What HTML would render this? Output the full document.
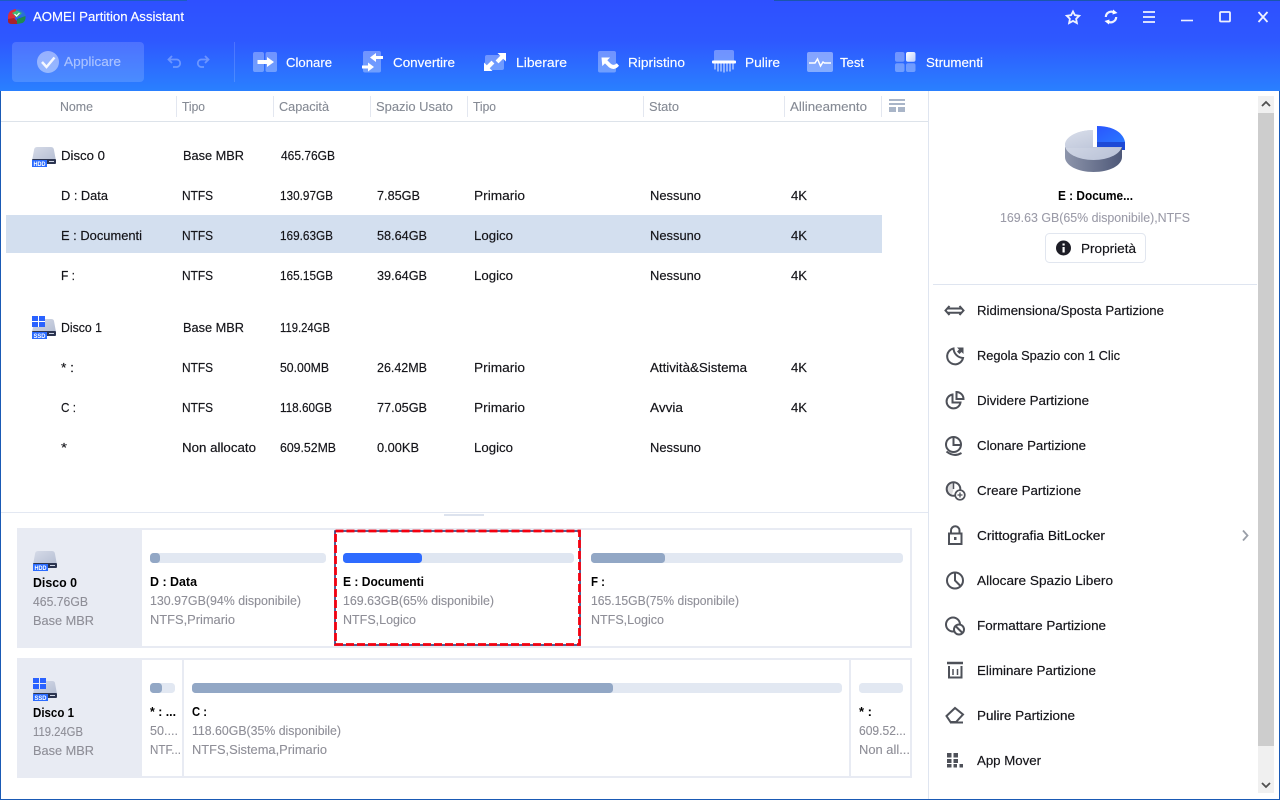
<!DOCTYPE html>
<html><head><meta charset="utf-8"><title>AOMEI Partition Assistant</title>
<style>
html,body{margin:0;padding:0;background:#fff;width:1280px;height:800px;overflow:hidden}
svg{display:block}
text{font-family:"Liberation Sans",sans-serif;font-size:13px;fill:#15151a;stroke:#15151a;stroke-width:.18}
.w{fill:#fff;stroke:#fff;stroke-width:.15}
.h{fill:#858a94;stroke:#858a94;stroke-width:.12}
.g{fill:#8e8e97;stroke:#8e8e97;stroke-width:.12}
.b{font-weight:bold;fill:#000;stroke:none}
.s{font-size:6.5px;font-weight:bold;fill:#fff;stroke:none}
.ic{fill:none;stroke:#4e5159;stroke-width:2}
.tb{fill:#fff;fill-opacity:.32}
</style></head><body>
<svg width="1280" height="800" viewBox="0 0 1280 800" xmlns="http://www.w3.org/2000/svg">
<defs>
<linearGradient id="hg" x1="0" y1="0" x2="0" y2="1"><stop offset="0" stop-color="#2e50ff"/><stop offset=".45" stop-color="#2e58ff"/><stop offset="1" stop-color="#2a80ff"/></linearGradient>
<linearGradient id="dk" x1="0" y1="0" x2="1" y2="1"><stop offset="0" stop-color="#d6dbe8"/><stop offset="1" stop-color="#b4bdd2"/></linearGradient>
<linearGradient id="pt" x1="0" y1="0" x2="1" y2="1"><stop offset="0" stop-color="#d9deea"/><stop offset="1" stop-color="#b8c1d6"/></linearGradient>
<linearGradient id="ps" x1="0" y1="0" x2="1" y2="0"><stop offset="0" stop-color="#8d95ab"/><stop offset="1" stop-color="#4e5878"/></linearGradient>
<linearGradient id="pb" x1="0" y1="0" x2="1" y2="1"><stop offset="0" stop-color="#2a55ff"/><stop offset="1" stop-color="#2a78ff"/></linearGradient>
<linearGradient id="sq" x1="0" y1="0" x2="1" y2="1"><stop offset="0" stop-color="#fff"/><stop offset="1" stop-color="#b9ccff"/></linearGradient>
</defs>
<rect width="1280" height="800" fill="#fff"/>
<rect width="1280" height="91" fill="url(#hg)"/>
<rect x="0" y="0" width="187" height="1" fill="#1c5cc0"/>
<rect x="774" y="0" width="506" height="1" fill="#1a55ad"/>

<!-- logo -->
<path d="M8 17q0-7 8-8l3 1-3 6-3 6-5-.5z" fill="#d92f3a"/>
<path d="M16 9q8 0 10 7l-5 1-5-3z" fill="#2a6fd8"/>
<path d="M8 19l6-1 3 3v3h-5q-4 0-4-3z" fill="#a8222c"/>
<path d="M17 19l8.500-3q.5 5-3 7l-5.500 1z" fill="#1f8a4f"/>
<path d="M12 13l5-2.500 5 2.500-5 5z" fill="#3dbb74"/>
<path d="M14.500 14l2 2 3-3" fill="none" stroke="#fff" stroke-width="1.200"/>
<text x="33" y="21" class="w" textLength="151" lengthAdjust="spacingAndGlyphs">AOMEI Partition Assistant</text>

<!-- window buttons -->
<g fill="none" stroke="#fff" stroke-opacity=".92" stroke-width="1.800">
<path d="M1073 11.500l1.900 3.700 4.300.6-3.100 3 .8 4.200-3.900-2.100-3.900 2.100.8-4.200-3.100-3 4.300-.6z"/>
<path d="M1105.800 17a5.500 5.500 0 0 1 8.700-4.300M1116.200 17a5.500 5.500 0 0 1-8.700 4.300" stroke-width="2.200"/>
<path d="M1143 12h12M1143 17h12M1143 22h12"/>
<path d="M1181 20.500h12" stroke-width="1.600"/>
<rect x="1220" y="12" width="10" height="9.500" rx="1"/>
<path d="M1258.500 12l9 10M1267.500 12l-9 10"/>
</g>
<path d="M1113 9.500l4.500 3.500-5 1.500zM1109 24.500l-4.500-3.500 5-1.500z" fill="#fff"/>

<!-- toolbar -->
<rect x="12" y="42" width="132" height="40" rx="4" fill="#fff" fill-opacity=".15"/>
<circle cx="48" cy="62" r="11" fill="#fff" fill-opacity=".42"/>
<path d="M42 62l4.500 5 8-9.500" fill="none" stroke="#fff" stroke-opacity=".9" stroke-width="2.500"/>
<text x="64" y="66" class="w" style="fill-opacity:.5;stroke-opacity:.4" textLength="57" lengthAdjust="spacingAndGlyphs">Applicare</text>
<g fill="none" stroke="#fff" stroke-opacity=".3" stroke-width="1.800">
<path d="M172 56l-3.500 3.500 3.500 3.500M169 59.500h8a3.800 3.800 0 0 1 0 7.500h-4"/>
<path d="M205 56l3.500 3.500-3.500 3.500M208 59.500h-7a3.800 3.800 0 0 0 0 7.500h3"/>
</g>
<rect x="234" y="42" width="1" height="40" fill="#fff" fill-opacity=".15"/>

<!-- clonare -->
<rect x="253" y="52" width="11" height="20" rx="2" class="tb"/>
<rect x="265.500" y="52" width="11.500" height="20" rx="2" class="tb"/>
<path d="M257.500 60h9.500v-3l7 5-7 5v-3h-9.500z" fill="#fff"/>
<!-- convertire -->
<rect x="363" y="51" width="18" height="21.500" rx="2" class="tb"/>
<path d="M370 57.500l6-4.500v3h7v3h-7v3zM374 67l-6 4.500v-3h-6v-3h6v-3z" fill="#fff"/>
<!-- liberare -->
<rect x="485" y="55" width="19" height="15" rx="2" class="tb"/>
<path d="M506 53v8.500l-2.800-2.800-4.700 4.700-2.900-2.900 4.700-4.700-2.800-2.800zM484 71v-8.500l2.800 2.800 4.700-4.700 2.900 2.900-4.700 4.700 2.800 2.800z" fill="#fff"/>
<!-- ripristino -->
<rect x="598" y="51" width="18" height="21.500" rx="2" class="tb"/>
<path d="M601.500 57.500h8.500l-2.700 2.700 3.500 3.500q3 2.500 6-.5l2.200 2.500q-4.500 5.500-10 1.700l-4-4-2.700 2.700z" fill="#fff"/>
<!-- pulire -->
<path d="M714 52q0-2 2-2h16q2 0 2 2v9h-20z" class="tb"/>
<rect x="712" y="60.500" width="24" height="3" rx="1" fill="#fff"/>
<g fill="#fff" fill-opacity=".45"><rect x="714" y="63.500" width="2" height="6"/><rect x="717" y="63.500" width="2" height="8"/><rect x="720" y="63.500" width="2" height="8"/><rect x="723" y="63.500" width="2" height="9"/><rect x="726" y="63.500" width="2" height="8"/><rect x="729" y="63.500" width="2" height="8"/><rect x="732" y="63.500" width="2" height="6"/></g>
<!-- test -->
<rect x="807" y="52" width="26" height="20" rx="2" class="tb" style="fill-opacity:.42"/>
<path d="M809 63h6l2.500-4 3 7 2.500-4 1.500 1h6.500" fill="none" stroke="#fff" stroke-width="1.500"/>
<!-- strumenti -->
<rect x="895" y="52" width="9.500" height="9.700" rx="2" class="tb"/>
<rect x="906" y="52" width="9.500" height="9.700" rx="2" fill="url(#sq)"/>
<rect x="895" y="63.300" width="9.500" height="8.700" rx="2" class="tb"/>
<rect x="906" y="63.300" width="9.500" height="8.700" rx="2" class="tb"/>

<g>
<text x="286" y="67" class="w" textLength="46" lengthAdjust="spacingAndGlyphs">Clonare</text>
<text x="393" y="67" class="w" textLength="62" lengthAdjust="spacingAndGlyphs">Convertire</text>
<text x="516" y="67" class="w" textLength="51" lengthAdjust="spacingAndGlyphs">Liberare</text>
<text x="628" y="67" class="w" textLength="57" lengthAdjust="spacingAndGlyphs">Ripristino</text>
<text x="745" y="67" class="w" textLength="35" lengthAdjust="spacingAndGlyphs">Pulire</text>
<text x="840" y="67" class="w" textLength="24" lengthAdjust="spacingAndGlyphs">Test</text>
<text x="926" y="67" class="w" textLength="57" lengthAdjust="spacingAndGlyphs">Strumenti</text>
</g>

<!-- table header -->
<g>
<text x="60" y="111" class="h" textLength="33" lengthAdjust="spacingAndGlyphs">Nome</text>
<text x="182" y="111" class="h" textLength="23" lengthAdjust="spacingAndGlyphs">Tipo</text>
<text x="279" y="111" class="h" textLength="50" lengthAdjust="spacingAndGlyphs">Capacità</text>
<text x="376" y="111" class="h" textLength="77" lengthAdjust="spacingAndGlyphs">Spazio Usato</text>
<text x="473" y="111" class="h" textLength="23" lengthAdjust="spacingAndGlyphs">Tipo</text>
<text x="649" y="111" class="h" textLength="30" lengthAdjust="spacingAndGlyphs">Stato</text>
<text x="790" y="111" class="h" textLength="77" lengthAdjust="spacingAndGlyphs">Allineamento</text>
</g>
<g fill="#e3e7f0"><rect x="176" y="96" width="1" height="21"/><rect x="273" y="96" width="1" height="21"/><rect x="370" y="96" width="1" height="21"/><rect x="467" y="96" width="1" height="21"/><rect x="643" y="96" width="1" height="21"/><rect x="784" y="96" width="1" height="21"/><rect x="881" y="96" width="1" height="21"/></g>
<g fill="#a9b5c8"><rect x="889" y="99" width="16" height="2"/><rect x="889" y="103" width="16" height="2"/><rect x="889" y="107" width="7" height="5"/><rect x="898" y="107" width="7" height="5"/></g>
<rect x="1" y="121" width="927" height="1" fill="#dde3ea"/>
<rect x="928" y="91" width="1" height="708" fill="#dfe5f0"/>

<!-- selected row -->
<rect x="6" y="215" width="876" height="38" fill="#d3dfef"/>

<!-- HDD table -->
<g transform="translate(32 147)">
<path d="M2 3q.3-3 3-3h14q2.700 0 3 3l2 11H0z" fill="url(#dk)"/>
<rect x="0" y="12" width="24" height="5" rx="1" fill="#2c3550"/>
<rect x="17" y="14" width="5" height="1" fill="#cfd6e6"/>
<rect x="0" y="13" width="15" height="7" fill="#2a6bff"/>
<text x="1.500" y="19" class="s" textLength="12" lengthAdjust="spacingAndGlyphs">HDD</text>
</g>
<!-- SSD table -->
<g transform="translate(32 316)">
<path d="M13 3h6q2.700 0 3 2l2 11H0l1-5h12z" fill="url(#dk)"/>
<rect x="0" y="15" width="24" height="5" rx="1" fill="#2c3550"/>
<rect x="17" y="17" width="5" height="1" fill="#cfd6e6"/>
<rect x="0" y="16" width="15" height="7" fill="#2a6bff"/>
<text x="1.500" y="22" class="s" textLength="12" lengthAdjust="spacingAndGlyphs">SSD</text>
<g fill="#2a62ff"><rect x="0" y="0" width="6" height="5"/><rect x="7" y="0" width="6" height="5"/><rect x="0" y="6" width="6" height="5"/><rect x="7" y="6" width="6" height="5"/></g>
</g>

<!-- table rows -->
<text x="61" y="160" textLength="44" lengthAdjust="spacingAndGlyphs">Disco 0</text>
<text x="183" y="160" textLength="61" lengthAdjust="spacingAndGlyphs">Base MBR</text>
<text x="281" y="160" textLength="54" lengthAdjust="spacingAndGlyphs">465.76GB</text>

<text x="61" y="200" textLength="47" lengthAdjust="spacingAndGlyphs">D : Data</text>
<text x="182" y="200" textLength="31" lengthAdjust="spacingAndGlyphs">NTFS</text>
<text x="280" y="200" textLength="53" lengthAdjust="spacingAndGlyphs">130.97GB</text>
<text x="377" y="200" textLength="43" lengthAdjust="spacingAndGlyphs">7.85GB</text>
<text x="474" y="200" textLength="51" lengthAdjust="spacingAndGlyphs">Primario</text>
<text x="650" y="200" textLength="51" lengthAdjust="spacingAndGlyphs">Nessuno</text>
<text x="791" y="200" textLength="16" lengthAdjust="spacingAndGlyphs">4K</text>

<text x="61" y="240" textLength="81" lengthAdjust="spacingAndGlyphs">E : Documenti</text>
<text x="182" y="240" textLength="31" lengthAdjust="spacingAndGlyphs">NTFS</text>
<text x="280" y="240" textLength="53" lengthAdjust="spacingAndGlyphs">169.63GB</text>
<text x="377" y="240" textLength="50" lengthAdjust="spacingAndGlyphs">58.64GB</text>
<text x="474" y="240" textLength="39" lengthAdjust="spacingAndGlyphs">Logico</text>
<text x="650" y="240" textLength="51" lengthAdjust="spacingAndGlyphs">Nessuno</text>
<text x="791" y="240" textLength="16" lengthAdjust="spacingAndGlyphs">4K</text>

<text x="61" y="280" textLength="14" lengthAdjust="spacingAndGlyphs">F :</text>
<text x="182" y="280" textLength="31" lengthAdjust="spacingAndGlyphs">NTFS</text>
<text x="280" y="280" textLength="53" lengthAdjust="spacingAndGlyphs">165.15GB</text>
<text x="377" y="280" textLength="50" lengthAdjust="spacingAndGlyphs">39.64GB</text>
<text x="474" y="280" textLength="39" lengthAdjust="spacingAndGlyphs">Logico</text>
<text x="650" y="280" textLength="51" lengthAdjust="spacingAndGlyphs">Nessuno</text>
<text x="791" y="280" textLength="16" lengthAdjust="spacingAndGlyphs">4K</text>

<text x="61" y="332" textLength="41" lengthAdjust="spacingAndGlyphs">Disco 1</text>
<text x="183" y="332" textLength="61" lengthAdjust="spacingAndGlyphs">Base MBR</text>
<text x="280" y="332" textLength="50" lengthAdjust="spacingAndGlyphs">119.24GB</text>

<text x="61" y="372" textLength="13" lengthAdjust="spacingAndGlyphs">* :</text>
<text x="182" y="372" textLength="31" lengthAdjust="spacingAndGlyphs">NTFS</text>
<text x="280" y="372" textLength="49" lengthAdjust="spacingAndGlyphs">50.00MB</text>
<text x="377" y="372" textLength="50" lengthAdjust="spacingAndGlyphs">26.42MB</text>
<text x="474" y="372" textLength="51" lengthAdjust="spacingAndGlyphs">Primario</text>
<text x="650" y="372" textLength="97" lengthAdjust="spacingAndGlyphs">Attività&amp;Sistema</text>
<text x="791" y="372" textLength="16" lengthAdjust="spacingAndGlyphs">4K</text>

<text x="61" y="412" textLength="15" lengthAdjust="spacingAndGlyphs">C :</text>
<text x="182" y="412" textLength="31" lengthAdjust="spacingAndGlyphs">NTFS</text>
<text x="280" y="412" textLength="52" lengthAdjust="spacingAndGlyphs">118.60GB</text>
<text x="377" y="412" textLength="50" lengthAdjust="spacingAndGlyphs">77.05GB</text>
<text x="474" y="412" textLength="51" lengthAdjust="spacingAndGlyphs">Primario</text>
<text x="650" y="412" textLength="33" lengthAdjust="spacingAndGlyphs">Avvia</text>
<text x="791" y="412" textLength="16" lengthAdjust="spacingAndGlyphs">4K</text>

<text x="61" y="452" textLength="6" lengthAdjust="spacingAndGlyphs">*</text>
<text x="182" y="452" textLength="74" lengthAdjust="spacingAndGlyphs">Non allocato</text>
<text x="280" y="452" textLength="56" lengthAdjust="spacingAndGlyphs">609.52MB</text>
<text x="377" y="452" textLength="42" lengthAdjust="spacingAndGlyphs">0.00KB</text>
<text x="474" y="452" textLength="39" lengthAdjust="spacingAndGlyphs">Logico</text>
<text x="650" y="452" textLength="51" lengthAdjust="spacingAndGlyphs">Nessuno</text>

<!-- splitter -->
<rect x="1" y="512" width="927" height="1" fill="#e3e8f2"/>
<rect x="444" y="514" width="40" height="2" fill="#dde3ee"/>

<!-- disk rows -->
<rect x="18" y="529" width="893" height="118" fill="#fff" stroke="#e8ebf3" stroke-width="2"/>
<rect x="17" y="528" width="125" height="120" fill="#e8ebf3"/>
<rect x="18" y="659" width="893" height="118" fill="#fff" stroke="#e8ebf3" stroke-width="2"/>
<rect x="17" y="658" width="125" height="120" fill="#e8ebf3"/>
<rect x="182" y="660" width="2" height="116" fill="#e8ebf3"/>
<rect x="849" y="660" width="2" height="116" fill="#e8ebf3"/>

<!-- HDD bottom -->
<g transform="translate(33 551)">
<path d="M2 3q.3-3 3-3h14q2.700 0 3 3l2 11H0z" fill="url(#dk)"/>
<rect x="0" y="12" width="24" height="5" rx="1" fill="#2c3550"/>
<rect x="17" y="14" width="5" height="1" fill="#cfd6e6"/>
<rect x="0" y="13" width="15" height="7" fill="#2a6bff"/>
<text x="1.500" y="19" class="s" textLength="12" lengthAdjust="spacingAndGlyphs">HDD</text>
</g>
<!-- SSD bottom -->
<g transform="translate(33 678)">
<path d="M13 3h6q2.700 0 3 2l2 11H0l1-5h12z" fill="url(#dk)"/>
<rect x="0" y="15" width="24" height="5" rx="1" fill="#2c3550"/>
<rect x="17" y="17" width="5" height="1" fill="#cfd6e6"/>
<rect x="0" y="16" width="15" height="7" fill="#2a6bff"/>
<text x="1.500" y="22" class="s" textLength="12" lengthAdjust="spacingAndGlyphs">SSD</text>
<g fill="#2a62ff"><rect x="0" y="0" width="6" height="5"/><rect x="7" y="0" width="6" height="5"/><rect x="0" y="6" width="6" height="5"/><rect x="7" y="6" width="6" height="5"/></g>
</g>

<text x="33" y="587" class="b" textLength="44" lengthAdjust="spacingAndGlyphs">Disco 0</text>
<text x="33" y="606" class="g" textLength="55" lengthAdjust="spacingAndGlyphs">465.76GB</text>
<text x="33" y="625" class="g" textLength="61" lengthAdjust="spacingAndGlyphs">Base MBR</text>
<text x="33" y="717" class="b" textLength="41" lengthAdjust="spacingAndGlyphs">Disco 1</text>
<text x="33" y="736" class="g" textLength="50" lengthAdjust="spacingAndGlyphs">119.24GB</text>
<text x="33" y="755" class="g" textLength="61" lengthAdjust="spacingAndGlyphs">Base MBR</text>

<!-- bars -->
<g fill="#e2e8f2">
<rect x="150" y="553" width="176" height="10" rx="3.500"/>
<rect x="343" y="553" width="231" height="10" rx="3.500" fill="#dfe6f1"/>
<rect x="591" y="553" width="312" height="10" rx="3.500"/>
<rect x="150" y="683" width="25" height="10" rx="3.500"/>
<rect x="192" y="683" width="650" height="10" rx="3.500"/>
<rect x="859" y="683" width="44" height="10" rx="3.500"/>
</g>
<g fill="#92a7c5">
<rect x="150" y="553" width="10" height="10" rx="3.500"/>
<rect x="591" y="553" width="74" height="10" rx="3.500"/>
<rect x="150" y="683" width="12" height="10" rx="3.500"/>
<rect x="192" y="683" width="421" height="10" rx="3.500"/>
</g>
<rect x="343" y="553" width="79" height="10" rx="3.500" fill="#2e6bff"/>

<!-- partition text -->
<text x="150" y="586" class="b" textLength="47" lengthAdjust="spacingAndGlyphs">D : Data</text>
<text x="150" y="605" class="g" textLength="151" lengthAdjust="spacingAndGlyphs">130.97GB(94% disponibile)</text>
<text x="150" y="624" class="g" textLength="85" lengthAdjust="spacingAndGlyphs">NTFS,Primario</text>

<text x="343" y="586" class="b" textLength="81" lengthAdjust="spacingAndGlyphs">E : Documenti</text>
<text x="343" y="605" class="g" textLength="151" lengthAdjust="spacingAndGlyphs">169.63GB(65% disponibile)</text>
<text x="343" y="624" class="g" textLength="73" lengthAdjust="spacingAndGlyphs">NTFS,Logico</text>

<text x="591" y="586" class="b" textLength="14" lengthAdjust="spacingAndGlyphs">F :</text>
<text x="591" y="605" class="g" textLength="148" lengthAdjust="spacingAndGlyphs">165.15GB(75% disponibile)</text>
<text x="591" y="624" class="g" textLength="73" lengthAdjust="spacingAndGlyphs">NTFS,Logico</text>

<text x="150" y="716" class="b" textLength="26" lengthAdjust="spacingAndGlyphs">* : ...</text>
<text x="150" y="735" class="g" textLength="28" lengthAdjust="spacingAndGlyphs">50....</text>
<text x="150" y="754" class="g" textLength="31" lengthAdjust="spacingAndGlyphs">NTF...</text>

<text x="192" y="716" class="b" textLength="15" lengthAdjust="spacingAndGlyphs">C :</text>
<text x="192" y="735" class="g" textLength="149" lengthAdjust="spacingAndGlyphs">118.60GB(35% disponibile)</text>
<text x="192" y="754" class="g" textLength="135" lengthAdjust="spacingAndGlyphs">NTFS,Sistema,Primario</text>

<text x="859" y="716" class="b" textLength="13" lengthAdjust="spacingAndGlyphs">* :</text>
<text x="859" y="735" class="g" textLength="47" lengthAdjust="spacingAndGlyphs">609.52...</text>
<text x="859" y="754" class="g" textLength="51" lengthAdjust="spacingAndGlyphs">Non all...</text>

<!-- selected partition -->
<rect x="335" y="531" width="245" height="114" fill="none" stroke="#1c2a70" stroke-width="1.500"/>
<rect x="335.500" y="531" width="244" height="113.500" fill="none" stroke="#f4000f" stroke-width="2.800" stroke-dasharray="8 3"/>

<!-- right: pie -->
<path d="M1065 147v10c0 8.500 12.700 15 28.500 15s28.500-6.500 28.500-15v-10z" fill="url(#ps)"/>
<ellipse cx="1093.500" cy="145" rx="28.500" ry="15" fill="url(#pt)"/>
<path d="M1093 128h32v19h-32z" fill="#fff"/>
<path d="M1065 145c0-8 12.700-15 28-15v17h28.500q.5 3 .5-2 0 0 0 2v1h-56.500z" fill="url(#pt)"/>
<path d="M1097 142h28v8h-3v-3h-25z" fill="#1d4ad6"/>
<path d="M1097 126c15 0 26 6 28 16h-28z" fill="url(#pb)"/>

<text x="1058" y="200" class="b" textLength="75" lengthAdjust="spacingAndGlyphs">E : Docume...</text>
<text x="1000" y="222" style="fill:#9b9ba8;stroke:#9b9ba8;stroke-width:.1" textLength="190" lengthAdjust="spacingAndGlyphs">169.63 GB(65% disponibile),NTFS</text>
<rect x="1045.500" y="233.500" width="100" height="29" rx="4" fill="#fff" stroke="#e1e6ef"/>
<circle cx="1063.500" cy="248" r="7.500" fill="#1d1d26"/>
<rect x="1062.500" y="247" width="2.200" height="5.500" fill="#fff"/><rect x="1062.500" y="243.500" width="2.200" height="2" fill="#fff"/>
<text x="1081" y="253" textLength="55" lengthAdjust="spacingAndGlyphs">Proprietà</text>
<rect x="933" y="284" width="324" height="1" fill="#dfe5f0"/>

<!-- menu icons -->
<g class="ic">
<path d="M949.500 306l-4 4.500 4 4.500M959.500 306l4 4.500-4 4.500M947 308.500h15M947 312.700h15"/>
<path d="M953.500 348.500a8 8 0 1 0 9.500 9.500 10 10 0 0 1-9.500-9.500z"/>
<path d="M952.500 394.500a7 7 0 1 0 8 8h-8z"/>
<path d="M956.500 392v7h7a7 7 0 0 0-7-7z"/>
<circle cx="953.500" cy="444.500" r="7.500"/><path d="M953.500 438v7h7"/><path d="M946.500 451.500q7.500 6 15 1.500"/>
<circle cx="953.500" cy="489" r="6.800"/>
<path d="M953.500 482.500v6.500" stroke-width="1.500"/>
<circle cx="960" cy="495" r="4.800" fill="#fff" stroke-width="1.700"/><path d="M957.500 495h5M960 492.500v5" stroke-width="1.300"/>
<rect x="949" y="533.500" width="12.500" height="10.500"/><path d="M951 533v-2.500a4 4 0 0 1 8.500 0v2.500"/>
<circle cx="955" cy="580.500" r="8"/><path d="M955 573v7.500l5.500 5.500"/>
<circle cx="953" cy="624.500" r="7"/><circle cx="959" cy="629.500" r="5" fill="#fff"/><path d="M955.500 626l7 7"/>
<path d="M947 663h16" stroke-width="2.500"/><path d="M949 666v11.500h12.500V666"/><path d="M953 669v6M957.500 669v6" stroke-width="1.500"/>
<path d="M946.500 716l8.500-8 8 6.500-7 7.500h-5.500zM950 722.500h13"/>
</g>
<rect x="954" y="537" width="2.500" height="3" fill="#4e5159"/>
<path d="M957 347.500l6.500 0 0 6.500-2-2-2 2-2.500-2.500 2-2z" fill="#4e5159"/>
<path d="M947 490a6.500 6.500 0 0 1 6.500-7v6.500l-1.500 5q-5-1-5-4.500z" fill="#4e5159" fill-opacity=".2"/>
<g fill="#4e5159">
<rect x="947" y="753" width="4.500" height="4.500"/><rect x="953.500" y="753" width="4.500" height="4.500"/>
<rect x="947" y="759" width="4.500" height="4"/><rect x="953.500" y="759" width="4.500" height="4"/>
<rect x="947" y="764" width="4.500" height="3.500"/><rect x="953.500" y="764" width="3.500" height="3.500"/><rect x="959.500" y="764" width="3.500" height="3.500"/>
</g>

<!-- menu labels -->
<text x="977" y="315" textLength="187" lengthAdjust="spacingAndGlyphs">Ridimensiona/Sposta Partizione</text>
<text x="977" y="360" textLength="143" lengthAdjust="spacingAndGlyphs">Regola Spazio con 1 Clic</text>
<text x="977" y="405" textLength="112" lengthAdjust="spacingAndGlyphs">Dividere Partizione</text>
<text x="977" y="450" textLength="109" lengthAdjust="spacingAndGlyphs">Clonare Partizione</text>
<text x="977" y="495" textLength="104" lengthAdjust="spacingAndGlyphs">Creare Partizione</text>
<text x="977" y="540" textLength="128" lengthAdjust="spacingAndGlyphs">Crittografia BitLocker</text>
<text x="977" y="585" textLength="136" lengthAdjust="spacingAndGlyphs">Allocare Spazio Libero</text>
<text x="977" y="630" textLength="129" lengthAdjust="spacingAndGlyphs">Formattare Partizione</text>
<text x="977" y="675" textLength="119" lengthAdjust="spacingAndGlyphs">Eliminare Partizione</text>
<text x="977" y="720" textLength="98" lengthAdjust="spacingAndGlyphs">Pulire Partizione</text>
<text x="977" y="765" textLength="64" lengthAdjust="spacingAndGlyphs">App Mover</text>
<path d="M1243 530.500l4.500 5-4.500 5" fill="none" stroke="#9a9fa8" stroke-width="1.800"/>

<!-- scrollbar -->
<rect x="1258" y="96" width="16" height="697" fill="#f0f0f0"/>
<rect x="1258" y="113" width="16" height="633" fill="#cdcdcd"/>
<path d="M1262 106l4-4 4 4M1262 783l4 4 4-4" fill="none" stroke="#505050" stroke-width="1.800"/>

<!-- window border -->
<rect x="0" y="91" width="1" height="709" fill="#1a5ab5"/>
<rect x="1279" y="91" width="1" height="709" fill="#1a5ab5"/>
<rect x="0" y="799" width="1280" height="1" fill="#1a5ab5"/>
</svg>
</body></html>
